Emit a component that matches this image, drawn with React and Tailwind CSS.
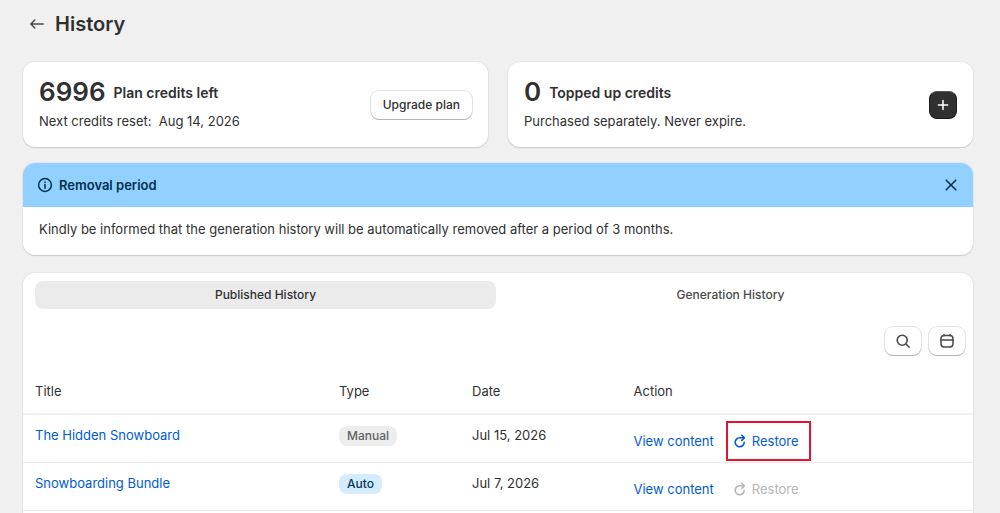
import React from 'react';

const rows = [
  { id: 1, title: 'The Hidden Snowboard', type: 'Manual', date: 'Jul 15, 2026', restorable: true, highlighted: true },
  { id: 2, title: 'Snowboarding Bundle', type: 'Auto', date: 'Jul 7, 2026', restorable: false },
];

const cardClass = 'rounded-xl bg-white shadow-[0_1px_1px_0_#c9c9c9,0_0_0_1px_#e6e6e6]';
const buttonClass = 'flex h-7 items-center justify-center rounded-lg bg-white shadow-[0_1px_0_0_#b5b5b5,0_0_0_1px_#e3e3e3]';

function ArrowLeftIcon() {
  return (
    <svg className="h-5 w-5" viewBox="0 0 20 20" fill="none" stroke="#4a4a4a" strokeWidth="1.5" strokeLinecap="round" strokeLinejoin="round" aria-hidden="true">
      <path d="M16.2 10H4M7.8 6 3.8 10l4 4" />
    </svg>
  );
}

function InfoIcon() {
  return (
    <svg className="h-5 w-5" viewBox="0 0 20 20" fill="none" stroke="#00304f" strokeWidth="1.5" strokeLinecap="round" aria-hidden="true">
      <circle cx="10" cy="10" r="6.4" />
      <path d="M10 9.6v3.6" />
      <circle cx="10" cy="7.1" r="0.9" fill="#00304f" stroke="none" />
    </svg>
  );
}

function CloseIcon() {
  return (
    <svg className="h-5 w-5" viewBox="0 0 20 20" fill="none" stroke="#00304f" strokeWidth="1.6" strokeLinecap="round" aria-hidden="true">
      <path d="m5.2 5.2 9.6 9.6M14.8 5.2l-9.6 9.6" />
    </svg>
  );
}

function PlusIcon() {
  return (
    <svg className="h-5 w-5" viewBox="0 0 20 20" fill="none" stroke="#fff" strokeWidth="1.5" strokeLinecap="round" aria-hidden="true">
      <path d="M10 5.4v9.2M5.4 10h9.2" />
    </svg>
  );
}

function SearchIcon() {
  return (
    <svg className="h-5 w-5" viewBox="0 0 20 20" fill="none" stroke="#4a4a4a" strokeWidth="1.6" strokeLinecap="round" aria-hidden="true">
      <circle cx="9.2" cy="9.2" r="5" />
      <path d="m13 13 3.2 3.2" />
    </svg>
  );
}

function CalendarIcon() {
  return (
    <svg className="h-5 w-5" viewBox="0 0 20 20" fill="none" stroke="#4a4a4a" strokeWidth="1.5" strokeLinecap="round" aria-hidden="true">
      <rect x="4" y="4.6" width="12" height="11.4" rx="3.2" />
      <path d="M4 9h12M7 3.6v1.2M13 3.6v1.2" />
    </svg>
  );
}

function RestoreIcon() {
  return (
    <svg className="h-4 w-3" viewBox="0 0 12 16" fill="none" stroke="currentColor" strokeWidth="1.6" strokeLinecap="round" strokeLinejoin="round" aria-hidden="true">
      <path d="M10.2 9.2A4.5 4.5 0 1 1 5.7 4.8H10" />
      <path d="M7.8 2.2 10.4 4.8 7.8 7.4" />
    </svg>
  );
}

function HistoryRow({ row }) {
  return (
    <tr className="h-12 border-b border-[#ebebeb] align-top">
      <td className="px-3 pt-2.5">
        <a href="#" className="text-[#005bd3]">{row.title}</a>
      </td>
      <td className="px-3 pt-2.5">
        <span className={`inline-block rounded-lg px-2 text-xs leading-5 font-medium ${row.type === 'Auto' ? 'bg-[#d5ebff] text-[#003a5a]' : 'bg-[#ededed] text-[#616161]'}`}>
          {row.type}
        </span>
      </td>
      <td className="px-3 pt-2.5">{row.date}</td>
      <td className="px-3 pt-4">
        <div className="flex items-center gap-5">
          <a href="#" className="text-[#005bd3]">View content</a>
          <button
            type="button"
            disabled={!row.restorable}
            className="relative flex items-center gap-1.5 text-[#005bd3] disabled:text-[#b5b5b5]"
          >
            <RestoreIcon />
            Restore
            {row.highlighted && (
              <span className="pointer-events-none absolute -inset-y-2.5 -right-3 -left-2 border-2 border-[#e5132e]" />
            )}
          </button>
        </div>
      </td>
    </tr>
  );
}

export default function App() {
  return (
    <div className="min-h-screen bg-[#f0f0f0] pt-2 pr-[27px] pl-[23px] font-['Inter',sans-serif] text-[13px] leading-5 text-[#303030]">
      <header className="flex h-8 items-center gap-2">
        <button type="button" aria-label="Back" className="ml-1">
          <ArrowLeftIcon />
        </button>
        <h1 className="text-xl font-semibold">History</h1>
      </header>

      <section className="mt-[22px] grid grid-cols-2 gap-5">
        <div className={`flex items-center justify-between p-4 ${cardClass}`}>
          <div>
            <h2 className="flex items-end gap-2 text-sm leading-[26px] font-semibold">
              <span className="text-[26px] leading-7">6996</span>
              Plan credits left
            </h2>
            <p className="mt-[5px]">Next credits reset:&nbsp; Aug 14, 2026</p>
          </div>
          <button type="button" className={`px-3 text-xs font-medium ${buttonClass}`}>
            Upgrade plan
          </button>
        </div>
        <div className={`flex items-center justify-between p-4 ${cardClass}`}>
          <div>
            <h2 className="flex items-end gap-2 text-sm leading-[26px] font-semibold">
              <span className="text-[26px] leading-7">0</span>
              Topped up credits
            </h2>
            <p className="mt-[5px]">Purchased separately. Never expire.</p>
          </div>
          <button
            type="button"
            aria-label="Add credits"
            className="flex h-7 w-7 items-center justify-center rounded-lg border border-[#1a1a1a] border-t-[#555] bg-[#303030]"
          >
            <PlusIcon />
          </button>
        </div>
      </section>

      <section className={`mt-4 overflow-hidden ${cardClass}`}>
        <div className="flex h-11 items-center gap-1 bg-[#91d0ff] px-3 text-[#00304f]">
          <InfoIcon />
          <h2 className="font-semibold">Removal period</h2>
          <button type="button" aria-label="Dismiss" className="ml-auto">
            <CloseIcon />
          </button>
        </div>
        <p className="px-4 pt-3 pb-4">
          Kindly be informed that the generation history will be automatically removed after a period of 3 months.
        </p>
      </section>

      <section className={`mt-[18px] overflow-hidden pb-4 ${cardClass}`}>
        <div role="tablist" className="flex gap-1 px-3 pt-2 text-xs font-medium">
          <button type="button" role="tab" aria-selected="true" className="h-7 flex-1 rounded-lg bg-[#ebebeb]">
            Published History
          </button>
          <button type="button" role="tab" aria-selected="false" className="h-7 flex-1 rounded-lg text-[#4a4a4a]">
            Generation History
          </button>
        </div>

        <div className="mt-[18px] flex justify-end gap-2 pr-2">
          <button type="button" aria-label="Search" className={`w-9 ${buttonClass}`}>
            <SearchIcon />
          </button>
          <button type="button" aria-label="Filter by date" className={`w-9 ${buttonClass}`}>
            <CalendarIcon />
          </button>
        </div>

        <table className="mt-3.5 w-full table-fixed border-collapse text-left">
          <thead>
            <tr className="h-[45px] border-b-2 border-[#f1f1f1]">
              <th className="w-[32%] px-3 font-normal">Title</th>
              <th className="w-[14%] px-3 font-normal">Type</th>
              <th className="w-[17%] px-3 font-normal">Date</th>
              <th className="px-3 font-normal">Action</th>
            </tr>
          </thead>
          <tbody>
            {rows.map((row) => (
              <HistoryRow key={row.id} row={row} />
            ))}
          </tbody>
        </table>
      </section>
    </div>
  );
}
